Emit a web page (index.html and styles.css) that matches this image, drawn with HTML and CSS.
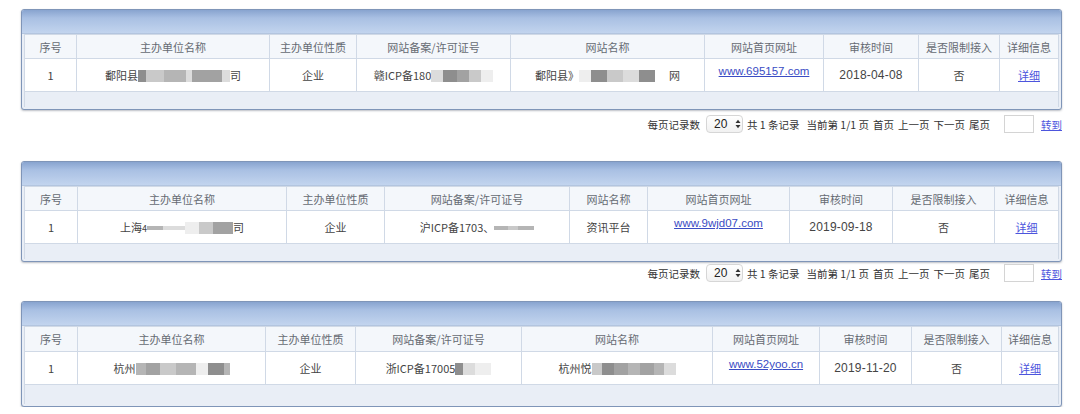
FILE: index.html
```html
<!DOCTYPE html>
<html lang="zh-CN">
<head>
<meta charset="utf-8">
<title>ICP备案查询</title>
<link rel="stylesheet" href="styles.css">
</head>
<body>
<div class="page">

  <section class="panel panel-1">
    <div class="box">
      <div class="bar"></div>
      <table class="list list-1">
        <colgroup><col class="c1"><col class="c2"><col class="c3"><col class="c4"><col class="c5"><col class="c6"><col class="c7"><col class="c8"><col class="c9"></colgroup>
        <thead>
          <tr><th>序号</th><th>主办单位名称</th><th>主办单位性质</th><th>网站备案/许可证号</th><th>网站名称</th><th>网站首页网址</th><th>审核时间</th><th>是否限制接入</th><th>详细信息</th></tr>
        </thead>
        <tbody>
          <tr>
            <td>1</td>
            <td>鄱阳县<span class="blk g5 w8"></span><span class="blk g2 w18"></span><span class="blk g3 w22"></span><span class="blk g1 w6"></span><span class="blk g4 w30"></span><span class="blk g1 w8"></span>司</td>
            <td>企业</td>
            <td>赣ICP备180<span class="blk g1 w12"></span><span class="blk g5 w14"></span><span class="blk g4 w12"></span><span class="blk g2 w12"></span><span class="blk g0 w12"></span></td>
            <td>鄱阳县》<span class="blk g0 w12"></span><span class="blk g5 w16"></span><span class="blk g2 w16"></span><span class="blk g1 w16"></span><span class="blk g5 w16"></span><span class="gap w14"></span>网</td>
            <td class="url"><a href="#">www.695157.com</a></td>
            <td class="date">2018-04-08</td>
            <td>否</td>
            <td><a class="more" href="#">详细</a></td>
          </tr>
        </tbody>
        <tfoot><tr><td colspan="9"></td></tr></tfoot>
      </table>
    </div>
    <div class="pager">
      <span>每页记录数</span>
      <span class="size">20<svg class="arrows" viewBox="0 0 6 10" width="6" height="10"><path d="M0.5 4 L3 0.8 L5.5 4 Z M0.5 6 L3 9.2 L5.5 6 Z" fill="#333"/></svg></span>
      <span>共 1 条记录</span>
      <span class="sp">当前第 1/1 页</span>
      <span>首页</span>
      <span>上一页</span>
      <span>下一页</span>
      <span>尾页</span>
      <input class="goto" type="text">
      <a class="go" href="#">转到</a>
    </div>
  </section>

  <section class="panel panel-2">
    <div class="box">
      <div class="bar"></div>
      <table class="list list-2">
        <colgroup><col class="c1"><col class="c2"><col class="c3"><col class="c4"><col class="c5"><col class="c6"><col class="c7"><col class="c8"><col class="c9"></colgroup>
        <thead>
          <tr><th>序号</th><th>主办单位名称</th><th>主办单位性质</th><th>网站备案/许可证号</th><th>网站名称</th><th>网站首页网址</th><th>审核时间</th><th>是否限制接入</th><th>详细信息</th></tr>
        </thead>
        <tbody>
          <tr>
            <td>1</td>
            <td>上海<span class="small">4</span><span class="blk g3 w16 thin"></span><span class="blk g1 w22 thin"></span><span class="blk g0 w14"></span><span class="blk g2 w14"></span><span class="blk g4 w20"></span>司</td>
            <td>企业</td>
            <td>沪ICP备1703、<span class="blk g3 w14 thin"></span><span class="blk g2 w10 thin"></span><span class="blk g3 w16 thin"></span></td>
            <td>资讯平台</td>
            <td class="url"><a href="#">www.9wjd07.com</a></td>
            <td class="date">2019-09-18</td>
            <td>否</td>
            <td><a class="more" href="#">详细</a></td>
          </tr>
        </tbody>
        <tfoot><tr><td colspan="9"></td></tr></tfoot>
      </table>
    </div>
    <div class="pager">
      <span>每页记录数</span>
      <span class="size">20<svg class="arrows" viewBox="0 0 6 10" width="6" height="10"><path d="M0.5 4 L3 0.8 L5.5 4 Z M0.5 6 L3 9.2 L5.5 6 Z" fill="#333"/></svg></span>
      <span>共 1 条记录</span>
      <span class="sp">当前第 1/1 页</span>
      <span>首页</span>
      <span>上一页</span>
      <span>下一页</span>
      <span>尾页</span>
      <input class="goto" type="text">
      <a class="go" href="#">转到</a>
    </div>
  </section>

  <section class="panel panel-3">
    <div class="box">
      <div class="bar"></div>
      <table class="list list-3">
        <colgroup><col class="c1"><col class="c2"><col class="c3"><col class="c4"><col class="c5"><col class="c6"><col class="c7"><col class="c8"><col class="c9"></colgroup>
        <thead>
          <tr><th>序号</th><th>主办单位名称</th><th>主办单位性质</th><th>网站备案/许可证号</th><th>网站名称</th><th>网站首页网址</th><th>审核时间</th><th>是否限制接入</th><th>详细信息</th></tr>
        </thead>
        <tbody>
          <tr>
            <td>1</td>
            <td>杭州<span class="blk g3 w10"></span><span class="blk g4 w14"></span><span class="blk g2 w16"></span><span class="blk g3 w20"></span><span class="blk g0 w12"></span><span class="blk g5 w16"></span><span class="blk g3 w6"></span></td>
            <td>企业</td>
            <td>浙ICP备17005<span class="blk g5 w8"></span><span class="blk g1 w12"></span><span class="blk g0 w16"></span></td>
            <td>杭州悦<span class="blk g2 w10"></span><span class="blk g5 w12"></span><span class="blk g4 w14"></span><span class="blk g3 w12"></span><span class="blk g4 w14"></span><span class="blk g3 w10"></span><span class="blk g1 w12"></span></td>
            <td class="url"><a href="#">www.52yoo.cn</a></td>
            <td class="date">2019-11-20</td>
            <td>否</td>
            <td><a class="more" href="#">详细</a></td>
          </tr>
        </tbody>
        <tfoot><tr><td colspan="9"></td></tr></tfoot>
      </table>
    </div>
  </section>

</div>
</body>
</html>
```

FILE: styles.css
```css
html, body {
  margin: 0;
  padding: 0;
  background: #ffffff;
}

body {
  font-family: "Noto Sans CJK SC", "Liberation Sans", sans-serif;
  font-size: 11px;
  color: #444444;
}

.page {
  padding: 9px 18px 0 21px;
}

.panel {
  width: 1041px;
}

.box {
  border: 1px solid #7f95b8;
  border-radius: 3px;
  padding: 0 2px 2px;
  background: #e9eef6;
  box-shadow: 0 1px 2px rgba(60, 70, 90, 0.35);
}

.bar {
  height: 23px;
  margin: 0 -2px;
  border-radius: 2px 2px 0 0;
  background: linear-gradient(to bottom, #88a4cf 0%, #a9c0e3 35%, #c2d4ee 100%);
  border-bottom: 1px solid #b3c5df;
}

.list {
  width: 100%;
  border-collapse: collapse;
  table-layout: fixed;
}

.list th,
.list td {
  border: 1px solid #d0d9e6;
  text-align: center;
  white-space: nowrap;
  overflow: hidden;
  padding: 0;
}

.list th {
  height: 23px;
  background: #f4f7fb;
  color: #666b73;
  font-weight: normal;
}

.list tbody td {
  height: 29px;
  background: #ffffff;
  color: #444444;
}

.list tfoot td {
  height: 15px;
  background: #e9eef6;
  border-bottom: none;
}

.list tbody td.url {
  vertical-align: top;
  padding-top: 3px;
}

.url a {
  font-family: "Liberation Sans", Arial, sans-serif;
  font-size: 11.5px;
  color: #3a4cc4;
  text-decoration: underline;
}

.date {
  font-family: "Liberation Sans", Arial, sans-serif;
  font-size: 12px;
  letter-spacing: 0.2px;
}

.more {
  color: #4d55dd;
  text-decoration: underline;
}

/* redaction blocks */
.blk {
  display: inline-block;
  height: 12px;
  vertical-align: -2px;
}
.blk.thin { height: 4px; vertical-align: 2px; }
.gap { display: inline-block; }
.g0 { background: #eeeeee; }
.g1 { background: #dcdcdc; }
.g2 { background: #c9c9c9; }
.g3 { background: #b5b5b5; }
.g4 { background: #a2a2a2; }
.g5 { background: #8e8e8e; }
.w6 { width: 6px; }
.w8 { width: 8px; }
.w10 { width: 10px; }
.w12 { width: 12px; }
.w14 { width: 14px; }
.w16 { width: 16px; }
.w18 { width: 18px; }
.w20 { width: 20px; }
.w22 { width: 22px; }
.w30 { width: 30px; }
.small { font-size: 9px; }

/* column widths */
.list-1 .c1 { width: 52px; }
.list-1 .c2 { width: 193px; }
.list-1 .c3 { width: 87px; }
.list-1 .c4 { width: 154px; }
.list-1 .c5 { width: 194px; }
.list-1 .c6 { width: 119px; }
.list-1 .c7 { width: 95px; }
.list-1 .c8 { width: 81px; }

.list-2 .c1 { width: 53px; }
.list-2 .c2 { width: 209px; }
.list-2 .c3 { width: 98px; }
.list-2 .c4 { width: 185px; }
.list-2 .c5 { width: 78px; }
.list-2 .c6 { width: 142px; }
.list-2 .c7 { width: 103px; }
.list-2 .c8 { width: 102px; }

.list-3 .c1 { width: 53px; }
.list-3 .c2 { width: 188px; }
.list-3 .c3 { width: 90px; }
.list-3 .c4 { width: 166px; }
.list-3 .c5 { width: 191px; }
.list-3 .c6 { width: 107px; }
.list-3 .c7 { width: 92px; }
.list-3 .c8 { width: 90px; }

.panel-3 .list th { height: 24px; }
.panel-3 .list tfoot td { height: 19px; }

/* pager */
.pager {
  display: flex;
  justify-content: flex-end;
  align-items: center;
  gap: 4px;
  height: 18px;
  margin: 5px 0 28px;
  color: #333333;
  font-size: 10.5px;
}

.panel-2 .pager {
  margin: 2px 0 19px;
}

.pager .sp {
  margin-left: 3px;
}

.size {
  display: inline-flex;
  align-items: center;
  gap: 8px;
  box-sizing: border-box;
  width: 37px;
  height: 18px;
  margin: 0 0 0 2px;
  padding-left: 7px;
  border: 1px solid #d6d6d6;
  border-radius: 4px;
  background: linear-gradient(to bottom, #ffffff, #f1f1f1);
  font-family: "Liberation Sans", Arial, sans-serif;
  font-size: 12px;
  color: #222222;
}

.goto {
  box-sizing: border-box;
  width: 30px;
  height: 18px;
  margin: 0 3px 0 10px;
  padding: 0;
  border: 1px solid #d4d4d4;
  background: #ffffff;
}

.go {
  color: #4d55dd;
  text-decoration: underline;
  font-size: 10.5px;
}
```
